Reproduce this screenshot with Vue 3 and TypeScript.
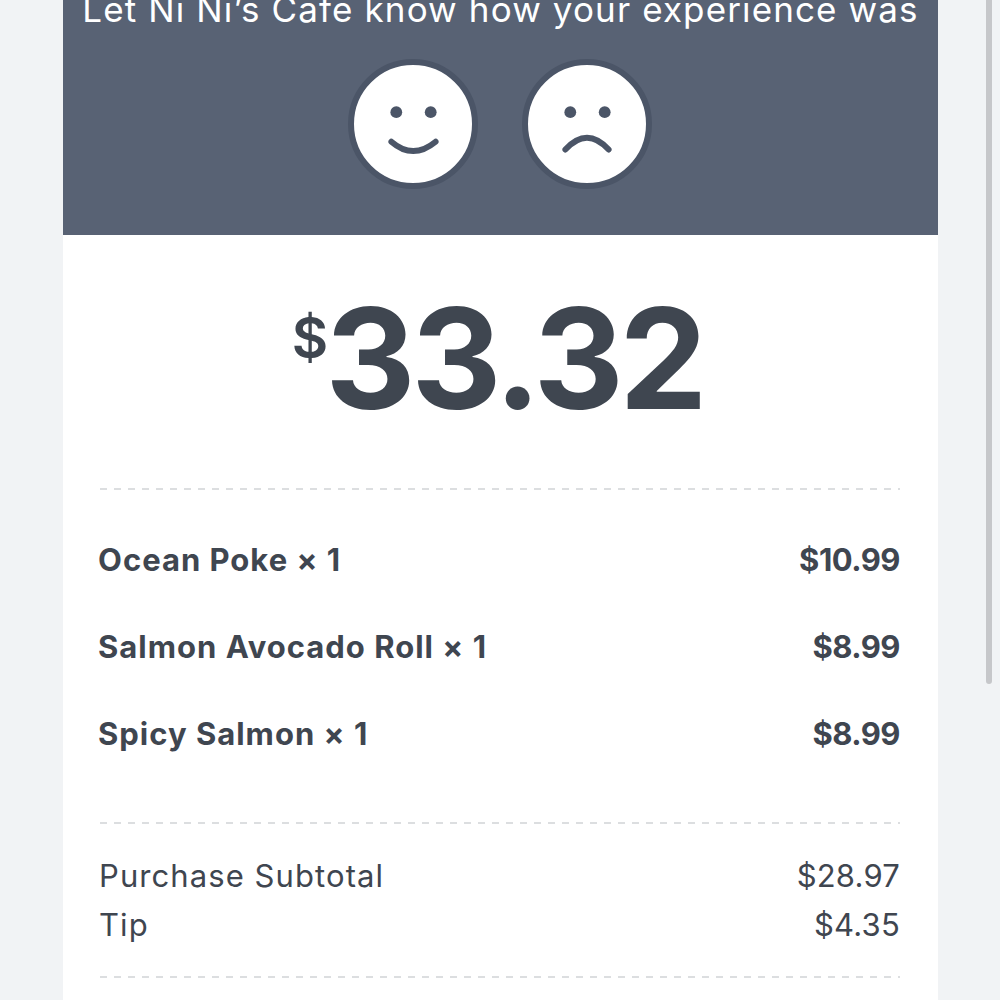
<script setup lang="ts">
const items = [
  { name: 'Ocean Poke × 1', price: '$10.99' },
  { name: 'Salmon Avocado Roll × 1', price: '$8.99' },
  { name: 'Spicy Salmon × 1', price: '$8.99' },
]
const totals = [
  { name: 'Purchase Subtotal', price: '$28.97' },
  { name: 'Tip', price: '$4.35' },
]
</script>

<template>
  <div class="page">
    <div class="receipt">
      <header class="feedback">
        <p class="feedback-text">Let Ni Ni’s Cafe know how your experience was</p>
        <div class="faces">
          <button class="face">
            <svg width="118" height="118" viewBox="0 0 120 120">
              <circle cx="43" cy="48" r="6" />
              <circle cx="78" cy="48" r="6" />
              <path d="M38 78 Q60 97 83 78" />
            </svg>
          </button>
          <button class="face">
            <svg width="118" height="118" viewBox="0 0 120 120">
              <circle cx="43" cy="48" r="6" />
              <circle cx="78" cy="48" r="6" />
              <path d="M38 86 Q60 62 82 86" />
            </svg>
          </button>
        </div>
      </header>

      <section class="body">
        <div class="amount">
          <span class="currency">$</span><span class="value">33.32</span>
        </div>

        <div class="divider"></div>

        <div class="items">
          <div v-for="item in items" :key="item.name" class="item-row">
            <span class="item-name">{{ item.name }}</span>
            <span class="item-price">{{ item.price }}</span>
          </div>
        </div>

        <div class="divider"></div>

        <div class="totals">
          <div v-for="row in totals" :key="row.name" class="total-row">
            <span class="total-name">{{ row.name }}</span>
            <span>{{ row.price }}</span>
          </div>
        </div>

        <div class="divider"></div>
      </section>
    </div>
    <div class="scrollbar"></div>
  </div>
</template>

<style>
html,
body {
  margin: 0;
  background: #f1f3f5;
  overflow: hidden;
}
</style>

<style scoped>
.page {
  position: relative;
  height: 1000px;
  overflow: hidden;
  background: #f1f3f5;
  font-family: Inter, "Liberation Sans", sans-serif;
  color: #3f4650;
}

.receipt {
  width: 875px;
  margin-left: 63px;
  background: #fff;
  height: 1000px;
}

.feedback {
  height: 235px;
  background: #586274;
  display: flex;
  flex-direction: column;
  align-items: center;
  overflow: hidden;
}

.feedback-text {
  margin: -11px 0 0;
  font-size: 35px;
  line-height: 40px;
  font-weight: 400;
  letter-spacing: 1.12px;
  color: #fff;
  white-space: nowrap;
}

.faces {
  display: flex;
  gap: 44px;
  margin-top: 30px;
  margin-right: 2px;
}

.face {
  width: 130px;
  height: 130px;
  padding: 0;
  border: 6px solid #4b5567;
  border-radius: 50%;
  background: #fff;
  display: flex;
  align-items: center;
  justify-content: center;
}

.face svg {
  fill: #4b5567;
}

.face path {
  fill: none;
  stroke: #4b5567;
  stroke-width: 6;
  stroke-linecap: round;
}

.body {
  padding: 0 38px 0 37px;
}

.amount {
  display: flex;
  justify-content: center;
  align-items: flex-start;
  padding-top: 44px;
  height: 253px;
  box-sizing: border-box;
  margin-left: -5px;
}

.currency {
  font-size: 56px;
  line-height: 64px;
  font-weight: 600;
  margin-top: 27px;
  margin-right: -3px;
}

.value {
  font-size: 140px;
  line-height: 158px;
  font-weight: 700;
  letter-spacing: -4.4px;
}

.divider {
  height: 2px;
  background: repeating-linear-gradient(to right, #dcdee0 0 7px, transparent 7px 14px);
}

.items {
  display: flex;
  flex-direction: column;
  gap: 51px;
  padding: 52px 0 70px;
}

.item-row {
  display: flex;
  justify-content: space-between;
  font-size: 31px;
  line-height: 36px;
  font-weight: 700;
}

.item-name {
  letter-spacing: 1px;
  margin-left: -2px;
}

.item-price {
  letter-spacing: -0.5px;
}

.totals {
  padding: 27px 0 27px;
}

.total-row {
  display: flex;
  justify-content: space-between;
  font-size: 31px;
  line-height: 49px;
  font-weight: 400;
  letter-spacing: 0.2px;
}

.total-name {
  letter-spacing: 1.08px;
  margin-left: -1px;
}

.scrollbar {
  position: absolute;
  top: 0;
  left: 986px;
  width: 6px;
  height: 684px;
  border-radius: 0 0 3px 3px;
  background: #c6c7ca;
}
</style>
